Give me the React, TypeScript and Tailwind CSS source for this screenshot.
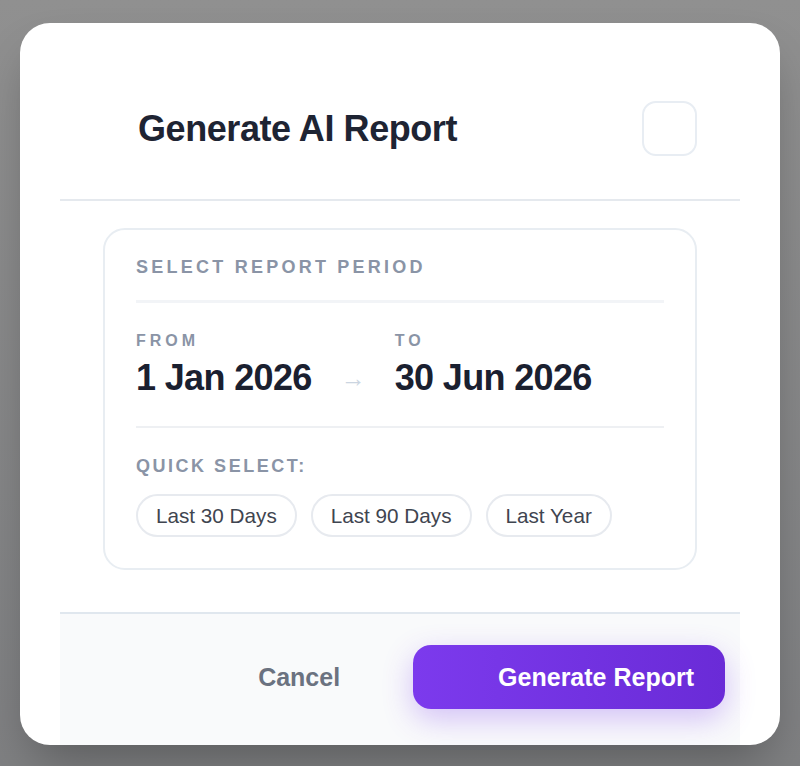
import React, { useState } from 'react';

const QUICK_RANGES = ['Last 30 Days', 'Last 90 Days', 'Last Year'];

const FONT = { fontFamily: '"Liberation Sans", Arial, sans-serif' };

export default function App() {
  const [range, setRange] = useState<string | null>(null);

  return (
    <div
      className="min-h-[766px] w-full flex items-center justify-center pt-[2px] bg-gradient-to-b from-[#909090] to-[#7f8082]"
      style={FONT}
    >
      <div className="w-[760px] bg-white rounded-[30px] px-[40px] shadow-[0_25px_50px_-12px_rgba(0,0,0,0.3)]">
        {/* header */}
        <div className="flex items-center justify-between pt-[78px] pb-[43px] pl-[78px] pr-[43px] border-b-2 border-[#e5e9ee]">
          <h2 className="text-[36px] leading-[40px] font-bold tracking-[-0.012em] text-[#1e2433]">
            Generate AI Report
          </h2>
          <button
            type="button"
            aria-label="Close"
            className="w-[55px] h-[55px] rounded-[14px] border-2 border-[#e8edf3] bg-white"
          />
        </div>

        {/* body */}
        <div className="px-[43px] pt-[27px] pb-[42px]">
          <div className="rounded-[22px] border-2 border-[#e8edf2] px-[31px] pt-[27px] pb-[31px]">
            <p className="text-[18px] leading-[20px] font-bold uppercase tracking-[0.18em] text-[#8a94a6]">
              Select Report Period
            </p>
            <div className="mt-[23px] h-[3px] bg-[#f2f4f7]" />

            <div className="flex items-end gap-[29px] pt-[30px] pb-[28px] border-b-2 border-[#eef0f3]">
              <div>
                <p className="text-[16px] leading-[16px] font-bold uppercase tracking-[0.25em] text-[#8a94a6]">
                  From
                </p>
                <p className="mt-[9px] text-[36px] leading-[40px] font-bold tracking-[-0.018em] text-[#1a2030]">
                  1 Jan 2026
                </p>
              </div>
              <span className="text-[25px] leading-[40px] text-[#cbd5e1]">→</span>
              <div>
                <p className="text-[16px] leading-[16px] font-bold uppercase tracking-[0.25em] text-[#8a94a6]">
                  To
                </p>
                <p className="mt-[9px] text-[36px] leading-[40px] font-bold tracking-[-0.018em] text-[#1a2030]">
                  30 Jun 2026
                </p>
              </div>
            </div>

            <p className="mt-[28px] text-[18px] leading-[20px] font-bold uppercase tracking-[0.14em] text-[#8a94a6]">
              Quick Select:
            </p>
            <div className="mt-[18px] flex gap-[14px]">
              {QUICK_RANGES.map((r) => (
                <button
                  key={r}
                  type="button"
                  onClick={() => setRange(r)}
                  className={`h-[43px] px-[18px] rounded-full border-2 text-[20.7px] leading-[24px] text-[#3f4550] bg-white ${
                    range === r ? 'border-[#a78bfa]' : 'border-[#e7eaef]'
                  }`}
                >
                  {r}
                </button>
              ))}
            </div>
          </div>
        </div>

        {/* footer */}
        <div className="flex items-center justify-end gap-[49px] bg-[#f9fafb] border-t-2 border-[#e0e7ee] pt-[31px] pb-[36px] pr-[15px]">
          <button type="button" className="px-6 text-[25px] leading-[29px] font-bold text-[#6b7280]">
            Cancel
          </button>
          <button
            type="button"
            className="h-[64px] pl-[85px] pr-[31px] rounded-[18px] bg-gradient-to-r from-[#7c3aed] to-[#6a2bd7] text-white text-[25px] leading-[29px] font-bold shadow-[0_10px_30px_rgba(124,58,237,0.3)]"
          >
            Generate Report
          </button>
        </div>
      </div>
    </div>
  );
}
